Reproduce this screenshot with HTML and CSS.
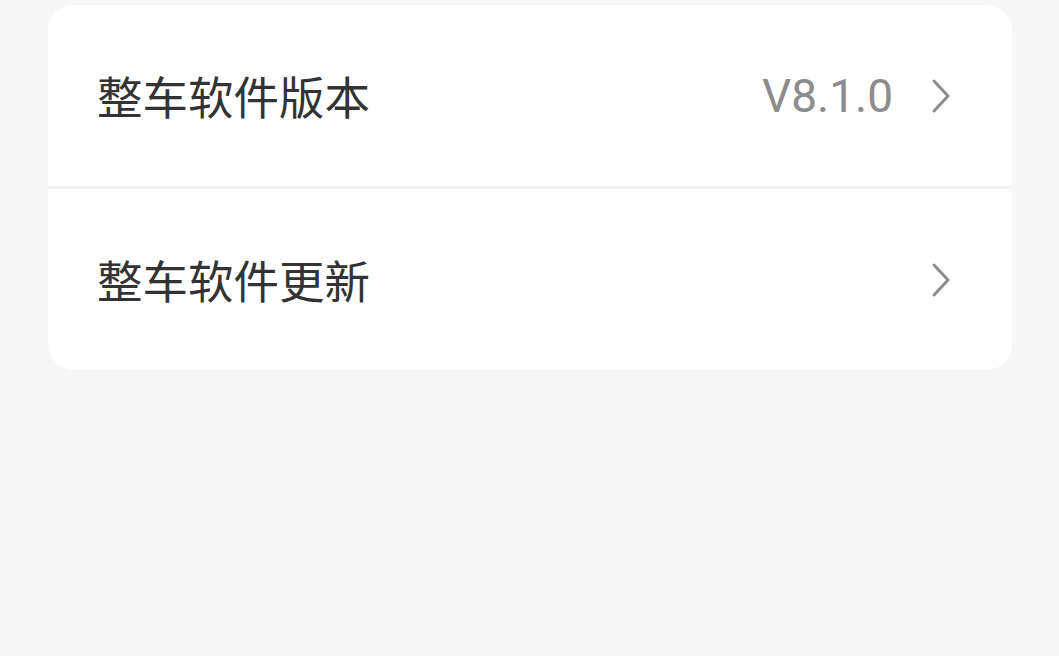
FILE: index.html
```html
<!DOCTYPE html>
<html lang="zh-CN">
  <head>
    <meta charset="UTF-8" />
    <meta name="viewport" content="width=device-width, initial-scale=1.0" />
    <title>整车软件</title>
    <link rel="stylesheet" href="styles.css">
  </head>
  <body>
    <main>
      <!-- Settings card -->
      <section class="card">
        <div class="row">
          <span class="label">整车软件版本</span>
          <span class="value">V8.1.0</span>
          <svg class="chevron" viewBox="0 0 20 36" width="20" height="36">
            <path d="M3 3 L17 18 L3 33" fill="none" stroke="#8c8c8c" stroke-width="3" stroke-linecap="round" stroke-linejoin="round"/>
          </svg>
        </div>
        <div class="divider"></div>
        <div class="row">
          <span class="label">整车软件更新</span>
          <svg class="chevron" viewBox="0 0 20 36" width="20" height="36">
            <path d="M3 3 L17 18 L3 33" fill="none" stroke="#8c8c8c" stroke-width="3" stroke-linecap="round" stroke-linejoin="round"/>
          </svg>
        </div>
      </section>
    </main>
  </body>
</html>
```

FILE: styles.css
```css
:root {
  --bg-page: #f7f7f7;
  --bg-card: #ffffff;
  --divider: #f3f3f3;
  --text-primary: #333333;
  --text-secondary: #8c8c8c;
}

* {
  margin: 0;
  padding: 0;
  box-sizing: border-box;
  font-family: "Noto Sans CJK SC", "Noto Sans", sans-serif;
}

body {
  background-color: var(--bg-page);
  width: 100%;
  min-height: 100vh;
}

main {
  padding: 5px 47px 0 48px;
}

.card {
  background-color: var(--bg-card);
  border-radius: 26px;
  overflow: hidden;
}

.row {
  height: 181px;
  display: flex;
  align-items: center;
  padding: 0 61px 0 49px;
}

.label {
  flex: 1;
  font-size: 45.5px;
  color: var(--text-primary);
  line-height: 1;
}

.value {
  font-family: Roboto, "Noto Sans", sans-serif;
  font-size: 46px;
  color: var(--text-secondary);
  line-height: 1;
  margin-right: 38px;
}

.chevron {
  display: block;
  flex-shrink: 0;
}

.divider {
  height: 3px;
  background-color: var(--divider);
}
```
